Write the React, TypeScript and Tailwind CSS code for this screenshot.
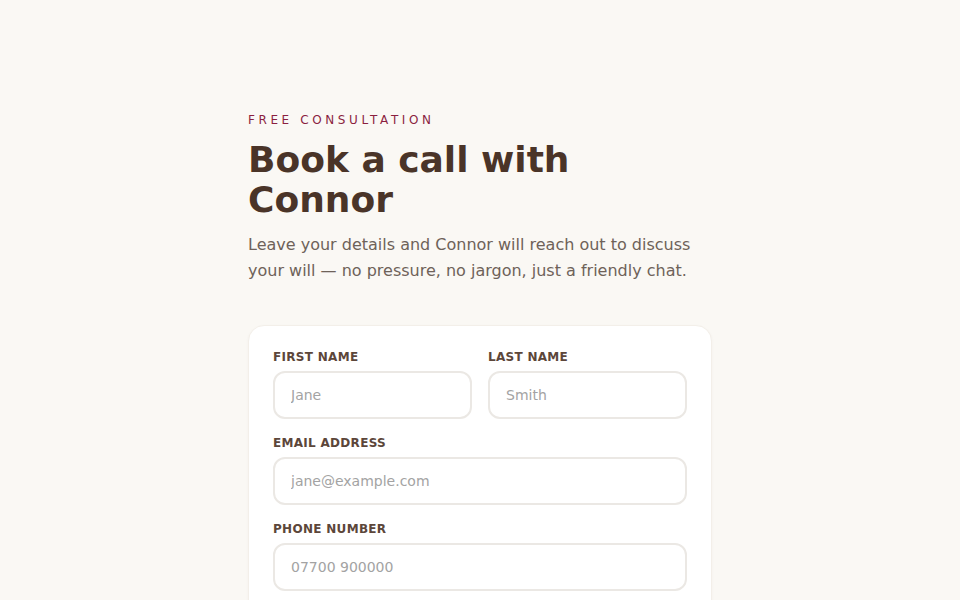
import React from 'react';

const fields = [
  { id: 'email', label: 'Email address', placeholder: 'jane@example.com', type: 'email' },
  { id: 'phone', label: 'Phone number', placeholder: '07700 900000', type: 'tel' },
];

function Field({ label, placeholder, type = 'text' }: { label: string; placeholder: string; type?: string }) {
  return (
    <div>
      <label className="block mb-1.5 text-xs leading-4 font-bold uppercase tracking-wide text-[#5c463a]">{label}</label>
      <input
        type={type}
        placeholder={placeholder}
        className="block w-full h-12 px-4 rounded-xl border-2 border-[#ebe8e4] bg-white text-sm text-[#4a3428] placeholder:text-[#a3a3a3] outline-none"
      />
    </div>
  );
}

export default function App() {
  return (
    <div
      className="min-h-screen bg-[#faf8f4] text-[#4a3428]"
      style={{ fontFamily: '"DejaVu Sans", sans-serif' }}
    >
      <div className="max-w-lg mx-auto px-6 pt-[112px] pb-16">
        <p className="text-xs leading-4 tracking-[0.3em] uppercase text-[#8b1f3f] mb-3">Free consultation</p>
        <h1 className="text-4xl font-bold leading-10 text-[#4a3428] pr-20">Book a call with Connor</h1>
        <p className="mt-3 text-base leading-[26px] text-[#6e6259]">
          Leave your details and Connor will reach out to discuss your will — no pressure, no jargon, just a friendly chat.
        </p>

        {/* Form card */}
        <form className="mt-[41px] bg-white rounded-2xl border border-[#f3efe9] shadow-[0_1px_3px_rgba(80,60,40,0.04)] px-6 pt-[23px] pb-6 space-y-4">
          <div className="grid grid-cols-2 gap-4">
            <Field label="First name" placeholder="Jane" />
            <Field label="Last name" placeholder="Smith" />
          </div>
          {fields.map((f) => (
            <Field key={f.id} label={f.label} placeholder={f.placeholder} type={f.type} />
          ))}
        </form>
      </div>
    </div>
  );
}
